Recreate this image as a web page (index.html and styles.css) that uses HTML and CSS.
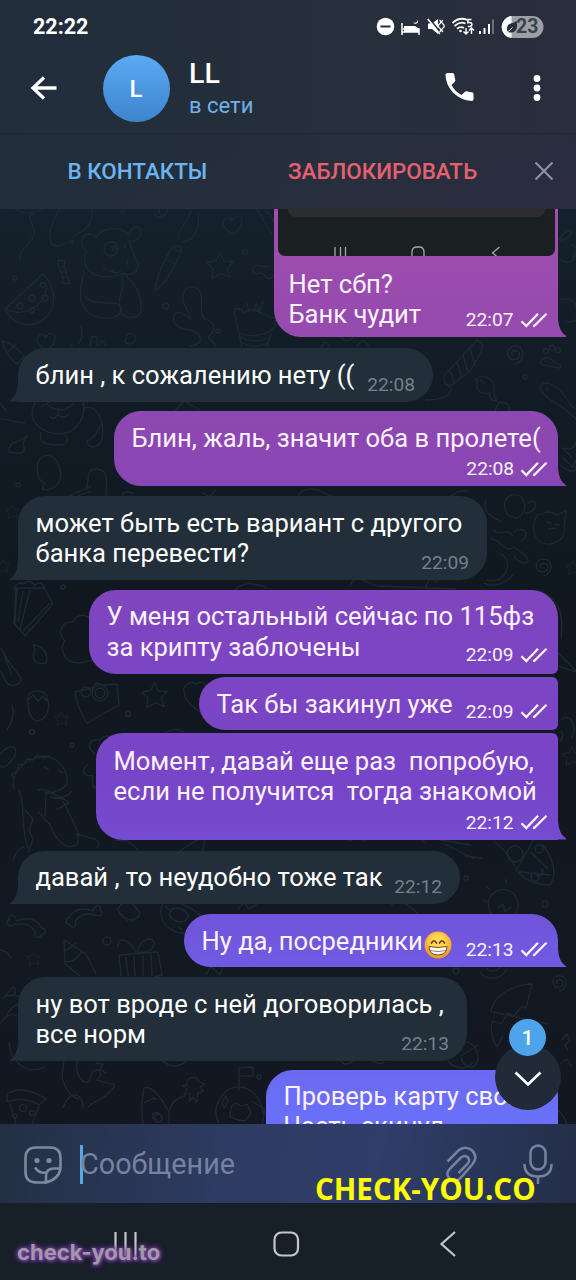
FILE: index.html
```html
<!DOCTYPE html>
<html lang="ru">
<head>
<meta charset="utf-8">
<title>LL</title>
<link rel="stylesheet" href="styles.css">
</head>
<body>
<svg class="defs" width="0" height="0" aria-hidden="true">
  <symbol id="ticks" viewBox="0 0 28 16"><path d="M1.500 9.200l4.800 4.800L18 1.800M13 13.700l1.200.3L26.500 1.800" fill="none" stroke="currentColor" stroke-width="2.300"/></symbol>
  <symbol id="star" viewBox="-14 -14 28 28"><path d="M0-13L4-4l9 0-6 7 3 9-9-4-9 5 1-10-6-6 9-2z"/></symbol>
  <symbol id="heart" viewBox="-12 -12 24 24"><path d="M1 9C-7 5-11-1-8-5s7-3 8 1c3-6 10-5 10 0S6 7 1 9z"/></symbol>
  <symbol id="spiral" viewBox="-10 -10 20 20"><path d="M1 1c-3 1-3-4 1-4 6 0 5 8-1 8-8 0-8-12 1-12 10 0 9 14 0 16"/></symbol>
  <symbol id="bone" viewBox="-20 -14 40 28"><path d="M-9-4C-11-12-18-10-16-5c-5 2 0 8 4 5C0-3 6 1 9 7c-3 5 4 7 6 2 5 0 4-6 0-6C11-6 1-8-9-4z"/></symbol>
</svg>
<div class="screen">
  <header class="top">
    <div class="status">
      <span class="clock">22:22</span>
      <svg class="status-icons" width="172" height="28" viewBox="0 0 172 28" fill="none" stroke="#fff" stroke-width="1.600">
        <circle cx="13.500" cy="14.500" r="8.800" fill="#fff" stroke="none"/><path d="M8.500 14.500h10" stroke="#252e3a" stroke-width="2"/>
        <path d="M30 11v12M30 20h17M47 23v-6H31" stroke-width="1.500"/><path d="M32 14h11l4 3v3H32z" fill="#fff" stroke="none"/><path d="M45.500 7.200q.5 4.300-4.500 3.300 1.800 2.300 4 .7 1.700-1.500.5-4z" fill="#fff" stroke="none"/>
        <path d="M56 11.500h4l6-4.500v15l-6-5h-4z" fill="#fff" stroke="none"/><path d="M57.500 6.500l11 14" stroke="#252e3a" stroke-width="1.600"/><path d="M55.800 7l12 15"/><path d="M67.500 8q2.500 2 0 4t0 4 0 4M71 8q-2.500 2 0 4t0 4 0 4" stroke-width="1.300"/>
        <path d="M80.500 11q7-6.500 15-3M82.500 14q5.500-5 11-2.500M85 16.800q3.500-3 7-.8" stroke-width="1.800"/><circle cx="88.500" cy="19" r="1.300" fill="#fff" stroke="none"/><path d="M99.500 7.500h-3.600v3.200q4-.7 4 1.800t-4 2" stroke-width="1.500"/><path d="M94 16v6m-2.500-2.500L94 22l2.500-2.500M99.500 22v-6m-2.500 2.500L99.500 16l2.500 2.500" stroke-width="1.400"/>
        <path d="M108 19v3M112.500 16v6M117 12v10" stroke-width="2"/><path d="M121 7.500V22" stroke="#68707a" stroke-width="2"/>
        <rect x="130" y="4" width="41.500" height="22" rx="11" fill="#9b9fa6" stroke="none"/><path d="M139.500 4.100V26a11 11 0 010-21.900z" fill="#fff" stroke="none"/><path d="M135.500 20q-2-7 3-8.500 3-.5 6-2.500 2 9-3 11-3 1-6 0z" fill="#26303c" stroke="none"/><path d="M133.500 20.500q4-1 7-5" stroke="#dadde0" stroke-width="1"/>
      </svg>
      <span class="battery">23</span>
    </div>
    <div class="peer">
      <svg class="back" width="28" height="26" viewBox="0 0 28 26"><path d="M26.500 13H3M14 2.500L3 13l11 10.500" fill="none" stroke="#fff" stroke-width="3.300"/></svg>
      <div class="avatar">L</div>
      <div class="who"><div class="name">LL</div><div class="online">в сети</div></div>
      <svg class="call" width="31" height="31" viewBox="0 0 31 31"><path fill="#fff" d="M1.500 2.500q.3-1.500 1.800-1.500h5q1.700 0 2 1.600.2 2.600 1 5.200.3 1.200-.6 2L7.500 13q3.300 6.500 10 10l3.500-3.300q.8-.7 1.800-.4 2.500.8 5 1 1.700.2 1.700 1.800v5.200q0 1.600-1.600 1.700Q17 28.500 9 20.500 1.500 12.500 1.500 2.500z"/></svg>
      <svg class="more" width="8" height="28" viewBox="0 0 8 28" fill="#fff"><circle cx="4" cy="4.500" r="3.400"/><circle cx="4" cy="14" r="3.400"/><circle cx="4" cy="23.500" r="3.400"/></svg>
    </div>
    <div class="actions">
      <span class="add">В КОНТАКТЫ</span>
      <span class="block">ЗАБЛОКИРОВАТЬ</span>
      <svg class="close" width="20" height="20" viewBox="0 0 20 20"><path d="M1.500 1.500l17 17M18.500 1.500l-17 17" stroke="#8a99aa" stroke-width="2" fill="none"/></svg>
    </div>
  </header>

  <main class="chat">
    <svg class="wallpaper" width="576" height="915" viewBox="0 209 576 915">
      <g>
        <path d="M15 209q10 8 28 0M31 213c-5 8 8 15 1 26-4 7-14 12-12 22M29 217l3-4 3 4M60 209c-12 18-14 38-2 37q9-2 13-6l1 4 2-8q21-10 18-27"/>
        <path d="M86 251c-6-5-6-15 2-17 4-1 7 1 8 4 7-12 25-12 33-3 2-10 13-10 12-2-1 7-8 9-12 8 3 9 4 14 9 22 1 11-9 13-14 10-14 7-32 4-38-6-2-7-2-11 0-16z"/><circle cx="111" cy="249" r="7"/><circle cx="114" cy="248" r="2"/><path d="M125 244v4M103 266q6 8 11 4M110 270q5 5 11 1M129 257q-3 5-1 8M84 273c-6 20-6 35 10 43 13 4 27 3 27-8-1-10-27 0-36-12M123 275c16 5 25 40 12 42-17 4-17-15-14-24 3-8 3-12 0-17"/>
        <path d="M155 291c1-14 7-25 16-43l10 4c-7 16-15 31-26 39zM171 248c6-3 9-3 11 4M166 259l10 5M180 239c-4-7 5-13 11-28M183 242c13-2 17-15 15-30M257 209l16 27M265 211q6 3 8 10M155 211c-3 8 13 10 12-2"/><circle cx="163" cy="211" r="4"/>
        <path d="M5 309l38-35c9 8 15 26 6 40-13 17-36 12-44-5zM5 309c17 9 40-1 42-24"/><circle cx="32" cy="298" r="3"/><circle cx="45" cy="298" r="3"/><circle cx="20" cy="306" r="3"/><circle cx="32" cy="310" r="2.500"/><circle cx="43" cy="285" r="2.500"/><circle cx="15" cy="278" r="2"/>
        <path d="M58 260l7 1-1 5 4 12 2 6-8-1 1-6-5-11zM60 267h6M61 272h6M63 277h5"/>
        <path d="M189 346c17-1 14-15-4-17-17-3-13-20-3-16 7 4 12 11 5-3-10-18 0-28 11-21 8 8-1 24 7 30 15 5 7 15 4 17-3 4 9 4 5 13"/><circle cx="245" cy="252" r="2.300"/><circle cx="166" cy="306" r="3"/><circle cx="218" cy="331" r="2"/><circle cx="123" cy="212" r="2"/>
        <path d="M235 315c-4-9 7-7 9-2 8-9 21 4 31 5 2 8-2 11-6 14-12 5-28 5-31-2zM239 333l3 14M271 334l-4 13M240 337q16 8 30 0M242 343q12 6 27 0M249 312l-2-9M254 312l2-9 3 9 4-11M253 267c-2 6 3 8 6 6 8-1 6 11 15 3M254 267c5-5 7 2 17-1"/>
        <path d="M2 341c9 2 13 5 22 15l-7 8c-8-6-13-14-15-23zM8 352l8-8M81 326c1 8 2 13-3 18M69 347l4-3M90 346l2-9q6-4 5 9M100 346l2-6 4 6M127 337c-1-5 10-5 8 3-1 7-15 4-8-2"/>
      </g>
      <g>
        <path d="M35 402c-9 17 4 32 26 32 19-2 25-20 22-32M41 407l9-5M46 404q15 12 27 0M58 408v7q-6 6-8 1M58 415q6 4 11-1M41 432c-3 11 4 13 18 13 9 0 9-4 7-10M83 409c15-10 25 23 17 34-5 8-16 2-12-3 10-3 10-14 14-16M0 403l6 8M0 419c9-1 13 4 25 4M9 452q-1-9 10-11l8-5-4 7c4 10-1 12-14 9zM37 468c2-19 20-15 23 1 3 14-7 23-18 20l3-6c-7-2-8-9-8-15z"/><circle cx="18" cy="485" r="2"/><path d="M86 490c4-13 0-21 10-21 12 0 11 10 10 27M69 496l23-10M73 498l18-7M175 411l9-10 16 9"/>
        <path d="M444 380q0 5 6 6l19-14c8-12 16-24 13-28l-5-4c-12 12-20 23-33 35zM463 355l5 18M457 362l5 16M450 371l5 13M470 348l5 18M426 400c24 0 30-10 21-16M475 380c6-7 20-3 19 10v5l3 6-6-1-2-7c-11 2-14-6-11-13zM480 380l4 3M541 364c-1-8 10-8 13-2q11 4 5 6-11-2-18-4M541 391c-3-14 17-10 31 16l4 2M541 391c8 11 20 12 35 28M548 387l-2 4"/><circle cx="546" cy="351" r="2.500"/><circle cx="552" cy="348" r="2.500"/><circle cx="558" cy="350" r="2.500"/><circle cx="525" cy="377" r="2"/>
        <path d="M559 240q5-10 13-9-3 10-13 9zM570 247c3-6 7 0 4 4l-1 10M559 258c8 9 17 4 17-8M559 300c10-3 18 1 17 9 6 5 0 16-10 12M522 410l-4 9 6 2M495 411l4-9 9 2 2 7M562 448l10 9M562 457l11 10 3-7M562 448c5 0 10 5 14-6M560 465q16 12 16 1M340 337q7 7 14 0M357 347q6-12 12 0M321 348q5-12 9 0"/>
        <path d="M298 496q5-10 20-6l15 7M201 492l9 5 6-8M122 497c0-6 8-6 12-3M450 497q9-8 18-6"/>
      </g>
      <g>
        <path d="M16 588h28l9 16-28 32-11-13zM17 588l-2 36M23 591l-5 31M30 590l-10 39M50 603l-27 28M14 590q2-9 9-6 5-6 12 1 7-5 10 4M78 663c-15 0-19-16-13-22-9-9-2-20 8-19 2-7 12-9 18-3M78 663q10-1 18-4M35 650l-2-5c7 0 17 8 13 18-9 2-16-2-11-13zM0 648c5 4 4 8 9 14l12 16c1 6-9 10-14 5L0 670M4 655l8 20M28 697c0-8 20-8 19 1 4 9 0 22-10 23-11-4-9-19-9-24zM28 700l5-5 5 6 5-5 4 5"/>
        <path d="M75 692l17-4 4-5 8 2 13-1 2 21-32 18q-9-13-12-31z"/><circle cx="86" cy="692" r="5"/><circle cx="100" cy="693" r="8"/><circle cx="100" cy="693" r="5"/><path d="M205 713c-16-5-22-17-21-25q5-8 13-4c4-4 10 0 8 3M12 705q4 11-5 25M0 754c15-16 20-2 12 6q-8 10-12 6M14 789c-3-12 4-25 22-31l10-2 8 3c10 6 14 15 13 25q-9 10-22 9M14 780l-2-6 5-3 1-6 6-1 3-5 6 1 4-5 7 3 6-2M44 767l5 3M58 770l5 3M95 754c-10-8-6-15 5-14 4-6 13-4 14 0M88 765c-9 6-2 13 5 10-3 11 3 17 6 10M162 735q10-9 22-3"/><circle cx="32" cy="732" r="2.500"/><circle cx="128" cy="714" r="2.500"/><circle cx="63" cy="587" r="2"/><circle cx="72" cy="745" r="2"/>
        <path d="M19 790c7 16 1 38 9 58M25 810l8 9-4 11 4 9-5 14M38 790c15-4 20 17 34 1M46 791l-1 25M38 812c6 2 5 9 12 12 6 18 16 24 22 22 9 0 5-8 6-14l-15-31M50 797l14 2 5 4-13 7M76 834l19 5q6 3 2 9M115 840l13 1q8 6 10 10M180 851q12-9 25-15l-2 15M13 860l5-10 6-3"/>
        <path d="M486 500c-4 14 7 17 16 22M508 497c15-10 24 14 9 21-14-1-15-14-9-21zM525 513c15-1 12-17 3-10M537 515l10-3c6 0 8 3 10 3l9-4-2 15c2 9-3 16-14 18-16 1-20-15-13-29zM546 522l5 1M555 524l5 1M548 529l8-1M493 530c5 7 13-4 20 6M491 539c10 0 13 15 23 8l12 9c8 11-10 8-12-1M514 532c10-8 17 4 7 9M513 575c-10 11-23 12-29 8M486 580c20 6 29-20 14-26M521 590c23 2 36 27 20 65M537 589c22 11 27 20 24 50M540 660l36 12M545 640l31 31M350 585c8-15 20 2 29 1l77 3M425 588l5-10 6 4 8-7M235 590c8-8 19-8 32-2M561 720c11-10 17 11 10 19M560 741q5-5 1-10"/>
      </g>
      <g>
        <path d="M161 915c-2-18 10-18 25-9 18 8 21 20 10 27-17 3-33-4-35-18zM169 914c3-10 16-6 19 2 0 8-15 8-19-2zM165 906l4 4M178 927l5 3M198 913l6 4M118 909c3-7 10-9 16-4l6 8c-2 10-18 9-22-4zM127 918v4M132 918v4M238 909l6-7 5 7 8-5"/>
        <path d="M64 940l22 14 10 20M64 940l1 24 15 12M64 952l12-9M65 961q8 3 17-9M119 955l39-3 4 23-8 2M119 955l2 21M126 957l2 19M134 956l1 20M143 955v21M151 953l1 23M118 947c-1-12 13-7 18 6M137 953c3-17 18-16 17-9-1 8-12 8-17 9zM0 950q7 1 11 8M3 999l9-12q4 0 3 7l-8 2q15-2 16 6-14 4-18 17M0 1024q9-13 17-8M9 1042c1 22 20 33 36 25M64 1060l-2 18q6 19 17 21M77 1058c-2 21 6 25 12 24l3-10c8-5 12 1 5 8 10 4 20 3 17 7-11 15-20 13-26 20M63 1108c7-20 21-15 20 1M96 1063l7 1-3 5 6 4M206 975l5-9 9 9 3-9"/>
        <path d="M495 842q15 12 22 29 12 14 33 14c8-12 2-29-8-41M516 871l18-32M519 872l32 3M531 852l17 17M536 876q9 0 6-7"/><circle cx="515" cy="854" r="8"/><circle cx="539" cy="849" r="4"/><circle cx="535" cy="877" r="4"/><circle cx="466" cy="878" r="2"/><circle cx="545" cy="904" r="3"/><circle cx="456" cy="971" r="3"/><path d="M490 912c-10-25 28-32 28-6 0 8-5 8-7 17l-14-2zM498 908l5-4 2 8 6-5M487 902l-4-2M490 890l-4-4M506 883v-4M440 840l31 5M445 844l29 15M465 856l17 2M350 841q7-9 14 0M480 971c6 11 21 9 27-2M486 968c4 5 11 4 15-2"/>
        <path d="M491 1013c0-12 15-28 41-29l-6 24-4-2-8 10-6-3-7 11-8-3q-5 10 4 26l6-11M493 1012l55 12M461 1045c5-7 17-1 17 14-3 14-15 8-17-2M461 1056l17-11M562 1040l5-6 3 7-5 4 3 6M560 1064l7-5 5 8M405 840q8-8 20 3M391 905q11-9 27 9"/>
        <path d="M7 1094q16-10 39 5l-7 6q-16-9-32-3zM10 1104l6 20M39 1106l-7 18"/><circle cx="23" cy="1108" r="3.500"/><circle cx="32" cy="1113" r="2.500"/><circle cx="15" cy="1116" r="2"/><path d="M143 1124q-3-17 1-36 10-4 25 24v12M144 1103q9-6 13-4M159 1113c-10-3-7 9-2 6M169 1113q2-14 16-17M187 1085c-1-9 11-10 12-3l6 2-5 3 3 4-5 2-1 9-4-5-4 5 1-9-6 2 3-6-5-3zM216 1109c6-30 42-30 47 4M219 1123q-4-7-3-14M262 1124q3-9 2-17M239 1091v-23l14-1v9h-14M231 1107l5-4 5 3 6-2 4 9-6 8-7-1-8-3zM222 1102l4-6 2 6-4 6zM252 1101l12 8"/><circle cx="158" cy="1118" r="4"/><circle cx="259" cy="1077" r="2"/><circle cx="107" cy="941" r="4"/>
        <path d="M162 1060q12 12 26 0M370 1060q12 6 14 2M447 1060q12 14 26 3M551 1107q11 3 16 17M340 1060q6 8 14 0"/>
      </g>
      <use href="#heart" x="220" y="213" width="24" height="24"/><use href="#star" x="206" y="251" width="28" height="29"/><use href="#heart" x="34" y="330" width="23" height="23"/><use href="#spiral" x="502" y="343" width="22" height="22"/><use href="#spiral" x="531" y="556" width="21" height="21"/><use href="#star" x="141" y="681" width="27" height="28"/><use href="#star" x="54" y="711" width="15" height="15"/><use href="#star" x="26" y="951" width="15" height="15"/><use href="#star" x="5" y="504" width="15" height="15"/><use href="#star" x="564" y="560" width="18" height="15"/><use href="#star" x="562" y="744" width="20" height="24"/><use href="#star" x="-4" y="558" width="14" height="16"/><use href="#bone" x="5" y="910" width="42" height="30"/><use href="#bone" x="64" y="899" width="40" height="32" transform="matrix(-1 0 0 1 168 0)"/><use href="#spiral" x="548" y="973" width="19" height="19"/>
    </svg>

    <div class="messages">
      <div class="bubble out tail photo">
        <div class="picture">
          <div class="strip"></div>
          <svg width="277" height="11" viewBox="0 0 277 11" fill="none" stroke="#a3a8a8" stroke-width="1.300"><path d="M57 2v9M62.500 2v9M67.500 2v9M134 11V7q0-5 5-5h2q5 0 5 5v4M221.500 2l-7 6 4 3"/></svg>
        </div>
        <p>Нет сбп?<br>Банк чудит</p>
        <span class="meta">22:07<svg><use href="#ticks"/></svg></span>
      </div>
      <div class="bubble in w415 gap11"><p>блин , к сожалению нету ((</p><span class="meta">22:08</span></div>
      <div class="bubble out tail w444 row gap9"><p>Блин, жаль, значит оба в пролете(</p><span class="meta">22:08<svg><use href="#ticks"/></svg></span></div>
      <div class="bubble in w469 gap10"><p>может быть есть вариант с другого<br>банка перевести?</p><span class="meta">22:09</span></div>
      <div class="bubble out w469 gap10"><p>У меня остальный сейчас по 115фз<br>за крипту заблочены</p><span class="meta">22:09<svg><use href="#ticks"/></svg></span></div>
      <div class="bubble out joined w359 gap3"><p>Так бы закинул уже</p><span class="meta">22:09<svg><use href="#ticks"/></svg></span></div>
      <div class="bubble out joined tail w462 row gap3"><p>Момент, давай еще раз&nbsp; попробую,<br>если не получится&nbsp; тогда знакомой</p><span class="meta">22:12<svg><use href="#ticks"/></svg></span></div>
      <div class="bubble in w442 gap11"><p>давай , то неудобно тоже так</p><span class="meta">22:12</span></div>
      <div class="bubble out tail w374 gap10"><p>Ну да, посредники<svg class="emoji" width="28" height="28" viewBox="0 0 28 28"><defs><radialGradient id="face" cx=".5" cy=".4" r=".6"><stop offset=".4" stop-color="#ffd94e"/><stop offset="1" stop-color="#f2921d"/></radialGradient></defs><circle cx="14" cy="14" r="13.500" fill="url(#face)"/><path d="M7.500 12q2.500-4.500 5 0M15.500 12q2.500-4.500 5 0" fill="none" stroke="#6b3b12" stroke-width="1.700" stroke-linecap="round"/><path d="M5 15.500q9 2 18 0 0 8.500-9 8.500t-9-8.500z" fill="#fff" stroke="#7a481c" stroke-width="1"/><path d="M6 19.500q8 2 16 0" fill="none" stroke="#8d6b46" stroke-width=".9"/></svg></p><span class="meta">22:13<svg><use href="#ticks"/></svg></span></div>
      <div class="bubble in w449 gap10"><p>ну вот вроде с ней договорилась ,<br>все норм</p><span class="meta">22:13</span></div>
      <div class="bubble out w292 last"><p>Проверь карту свою<br>Часть скинул</p></div>
    </div>

    <div class="jump">
      <svg width="28" height="16" viewBox="0 0 28 16"><path d="M1.500 1.500L14 13.500l12.500-12" fill="none" stroke="#fff" stroke-width="2.700"/></svg>
      <span class="unread">1</span>
    </div>
  </main>

  <footer class="composer">
    <svg class="sticker" width="38" height="38" viewBox="0 0 38 38" fill="none" stroke="#7b8a9d" stroke-width="2.600"><path d="M22 36.500H12Q1.500 36 1.500 26V12Q1.500 1.500 12 1.500h14q10.500 0 10.500 10.500v10.500Q35 33 22 36.500v-6q0-8 8-8h6"/><path d="M11 21.500q4.500 6.500 11.500 5"/><circle cx="13" cy="14.500" r="1.300"/><circle cx="25" cy="14.500" r="1.300"/></svg>
    <span class="caret"></span>
    <span class="placeholder">Сообщение</span>
    <svg class="clip" width="32" height="38" viewBox="0 0 32 38" fill="none" stroke="#7782a3" stroke-width="2.500"><path d="M1.500 15.500L12 4.800q7-6 14-.5 6.500 7 .5 14L14 32.500q-5 4.500-9.500 1-6-5-.5-11L15 11.500q4-3 7 0 2.500 3-.5 6.500L12.500 27"/></svg>
    <svg class="mic" width="30" height="40" viewBox="0 0 30 40" fill="none" stroke="#7782a3" stroke-width="2.500"><rect x="7.500" y="1.500" width="15" height="24" rx="7.500"/><path d="M1.500 20q0 12.500 13.500 12.500T28.500 20M15 32.500V40"/></svg>
  </footer>

  <nav class="keys">
    <svg width="576" height="77" viewBox="0 0 576 77" fill="none" stroke="#c3c7cb" stroke-width="2.200"><path d="M115.500 29v24M125.500 29v24M135.500 29v24M455 29l-13.500 12L455 53"/><rect x="274.500" y="29.500" width="23.500" height="23" rx="7"/></svg>
  </nav>
  <span class="mark mark-yellow">CHECK-YOU.CO</span>
  <span class="mark mark-grey">check-you.to</span>
</div>
</body>
</html>
```
FILE: styles.css
```css
* { box-sizing: border-box; }
body { margin: 0; background: #131b25; font-family: Roboto, "Liberation Sans", sans-serif; color: #fff; }
p { margin: 0; }
svg { display: block; flex: none; }
.defs { position: absolute; }
.screen { position: relative; width: 576px; height: 1280px; display: flex; flex-direction: column; overflow: hidden; }

.top { height: 209px; background: linear-gradient(90deg, #212d3b, #262f3b 60%, #292d3c); }
.status { position: relative; height: 54px; display: flex; padding: 12px 33px 0; justify-content: space-between; }
.clock { font-weight: 700; font-size: 21.500px; line-height: 30px; }
.status-icons { margin-right: -1px; }
.battery { position: absolute; left: 516px; top: 17px; width: 24px; font: 700 19.500px/20px Roboto, sans-serif; color: #38424e; }
.peer { height: 79px; display: flex; align-items: flex-start; padding-left: 30px; }
.back { margin-top: 21px; }
.avatar { width: 67px; height: 67px; margin: .5px 0 0 44.500px; border-radius: 50%; background: linear-gradient(#5aaaf4, #3f84cd); font-weight: 500; font-size: 24px; line-height: 69px; text-align: center; }
.who { margin-left: 19.500px; width: 256px; }
.name { margin-top: 4px; font-weight: 500; font-size: 28.500px; line-height: 32px; }
.online { font-size: 22px; line-height: 26px; margin-top: 3px; color: #72b0e8; }
.call { margin-top: 18px; margin-left: -1px; }
.more { margin: 20px 0 0 58px; }
.actions { height: 76px; display: flex; align-items: center; padding: 0 22px 1px 67.500px; border-top: 1px solid #1e2835; background: linear-gradient(165deg, #212e3e00 35%, #2d2b4580); font-weight: 500; font-size: 22.400px; }
.add { color: #6db4ee; width: 220.500px; }
.block { color: #e56170; }
.close { margin-left: auto; }

.chat { position: relative; height: 915px; overflow: hidden; background: linear-gradient(#14202b, #10171f 45%, #131923 80%, #121722); }
.wallpaper { position: absolute; inset: 0; fill: none; stroke: #1d2a34; stroke-width: 1.300; stroke-linejoin: round; }
.messages { position: relative; display: flex; flex-direction: column; padding: 0 18px; font-size: 25.560px; line-height: 30.300px; }
.bubble { position: relative; display: grid; padding: 11.500px 18px 11.500px 17.500px; white-space: nowrap; border-radius: 27px; flex: none; }
.bubble > * { grid-column: 1; grid-row: 1; }
.bubble.row { padding-bottom: 34px; }
.in { align-self: flex-start; background: #222e39; border-bottom-left-radius: 0; }
.out { align-self: flex-end; border-bottom-right-radius: 6px; color: #fdf2ff; background: linear-gradient(#a04eac 209px, #8c47b2 440px, #7d45c2 640px, #7745c8 790px, #7057de 940px, #6a6ff8 1110px) fixed; }
.joined { border-top-right-radius: 6px; }
.joined p, .row p { padding-top: 1px; margin-bottom: -1px; }
.tail { border-bottom-right-radius: 0; }
.in::before, .tail::after { content: ""; position: absolute; bottom: 0; width: 10px; height: 18px; background: inherit; background-attachment: inherit; }
.in::before { left: -9px; clip-path: path("M10 0V18H1Q0 17 2 16Q8 12 9 0Z"); }
.tail::after { right: -9px; clip-path: path("M0 0V18H9Q10 17 8 16Q2 12 1 0Z"); }
.meta { align-self: end; justify-self: end; display: flex; gap: 6px; font-size: 19.200px; line-height: 20px; margin-bottom: -4px; }
.row .meta { margin-bottom: -27px; }
.in .meta { color: #75808b; }
.in .meta { margin-bottom: -4.500px; }
.out .meta { margin-right: -7.500px; }
.out:not(.tail) .meta { margin-bottom: -3px; }
.meta svg { width: 28px; height: 16px; margin-top: 1.500px; }
.photo { width: 284px; height: 128px; padding: 0 18px 10px 14.500px; border-radius: 0 0 0 27px; grid-template: 47px 1fr / 100%; }
.photo p, .photo .meta { grid-row: 2; }
.photo p { padding-top: 12.500px; }
.photo .meta { margin-bottom: -1px; }
.picture { width: 277px; height: 47px; margin-left: -10.500px; background: #1a2022; border-radius: 0 0 7px 7px; display: flex; flex-direction: column; justify-content: space-between; align-items: center; overflow: hidden; }
.strip { width: 257px; height: 8px; background: #2d2c2e; border-radius: 0 0 10px 10px; }
.emoji { display: inline-block; vertical-align: -5px; margin: -4px 0 -4px 1px; }
.w292 { width: 292px; }
.w359 { width: 359px; }
.w374 { width: 374px; }
.w415 { width: 415px; }
.w442 { width: 442px; }
.w444 { width: 444px; }
.w449 { width: 449px; }
.w462 { width: 462px; }
.w469 { width: 469px; }
.gap3 { margin-top: 3.300px; }
.gap9 { margin-top: 9px; }
.gap10 { margin-top: 10px; }
.gap11 { margin-top: 11.300px; }
.last { margin-top: 9.300px; padding-top: 10.300px; }

.jump { position: absolute; right: 15px; bottom: 14px; width: 66px; height: 66px; border-radius: 50%; background: #202b37; display: grid; place-items: center; padding-top: 3px; }
.unread { position: absolute; left: 14px; top: -25px; width: 37px; height: 37px; border-radius: 50%; background: #4ea4ea; font-weight: 500; font-size: 21px; line-height: 38px; text-align: center; }

.composer { height: 79px; display: flex; padding-left: 24px; background: linear-gradient(100deg, #223044, #2e3b63 40%, #2f3e6a 65%, #242e47); }
.sticker { margin-top: 22px; }
.caret { width: 3px; height: 39px; margin: 21px 0 0 18px; background: #5ba7e4; }
.placeholder { margin: 23px 0 0 -3px; width: 365.500px; font-size: 28.800px; line-height: 34px; color: #7582a0; }
.clip { margin-top: 22px; }
.mic { margin: 20px 0 0 45.500px; }
.keys { height: 77px; background: #171f28; }

.mark { position: absolute; white-space: nowrap; }
.mark-yellow { left: 315px; top: 1170px; font: 700 29.500px/38px "Open Sans", sans-serif; color: #ff0; }
.mark-grey { left: 17px; top: 1237px; font: 700 22px/30px Inter, sans-serif; color: #9d9ba4; text-shadow: 0 0 4px #7f3fa8, 0 0 6px #7f3fa8, 1px 1px 3px #7f3fa8; }
```
